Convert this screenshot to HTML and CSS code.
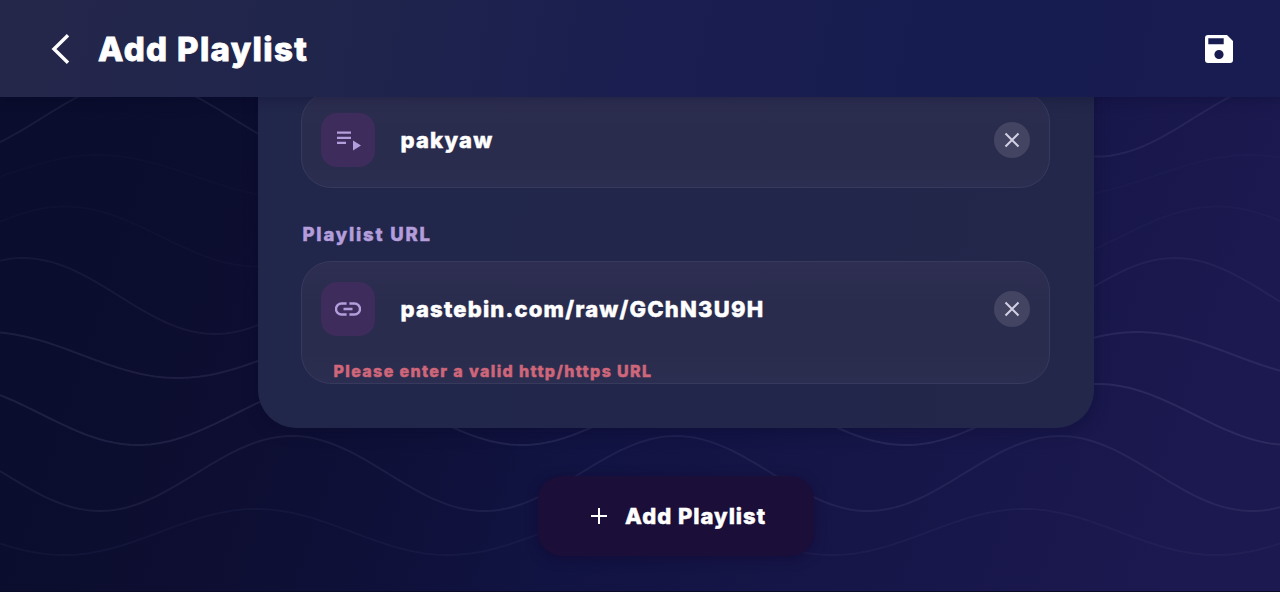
FILE: index.html
```html
<!DOCTYPE html>
<html lang="en">
<head>
    <meta charset="UTF-8">
    <title>Add Playlist</title>
    <link rel="stylesheet" href="styles.css">
</head>
<body>
    <svg class="waves" id="waves" viewBox="0 0 1280 592" aria-hidden="true"></svg>

    <header class="app-bar">
        <button class="icon-button" aria-label="Back">
            <svg width="20" height="30" viewBox="0 0 20 30"><path d="M18 1.3 4 15l14 13.7" fill="none" stroke="#fff" stroke-width="3.4"/></svg>
        </button>
        <h1 class="title">Add Playlist</h1>
        <button class="icon-button save" aria-label="Save">
            <svg width="28" height="28" viewBox="0 0 28 28"><path fill="#fff" fill-rule="evenodd" d="M3 0H22L28 6V25a3 3 0 0 1-3 3H3a3 3 0 0 1-3-3V3a3 3 0 0 1 3-3zM3.3 3.2V9.2H18.7V3.2zM14 14.9a4.6 4.6 0 1 0 0 9.2 4.6 4.6 0 0 0 0-9.2z"/></svg>
        </button>
    </header>

    <main class="content">
        <section class="card">
            <div class="field">
                <div class="field-row">
                    <span class="field-icon">
                        <svg width="26" height="22" viewBox="0 0 26 22" fill="#b39ddb"><path d="M2 2.6h14v2.2H2zM2 7.7h14v2.2H2zM2 12.8h9v2.2H2zM18 11.6v10l8-5z"/></svg>
                    </span>
                    <span class="field-value">pakyaw</span>
                    <button class="clear" aria-label="Clear name">
                        <svg width="16" height="16" viewBox="0 0 16 16"><path d="M1.5 1.5l13 13M14.5 1.5l-13 13"/></svg>
                    </button>
                </div>
            </div>

            <div class="label">Playlist URL</div>
            <div class="field">
                <div class="field-row">
                    <span class="field-icon">
                        <svg width="26" height="14" viewBox="0 0 26 14" fill="none" stroke="#b39ddb" stroke-width="2.4"><path d="M11.6 1.5H6.5a5.5 5.5 0 0 0 0 11h5.1M14.4 1.5h5.1a5.5 5.5 0 0 1 0 11h-5.1M8.5 7h9"/></svg>
                    </span>
                    <span class="field-value">pastebin.com/raw/GChN3U9H</span>
                    <button class="clear" aria-label="Clear URL">
                        <svg width="16" height="16" viewBox="0 0 16 16"><path d="M1.5 1.5l13 13M14.5 1.5l-13 13"/></svg>
                    </button>
                </div>
                <div class="error">Please enter a valid http/https URL</div>
            </div>
        </section>

        <button class="submit">
            <svg width="16" height="16" viewBox="0 0 16 16"><path d="M8 0v16M0 8h16" stroke="#fff" stroke-width="2"/></svg>
            <span>Add Playlist</span>
        </button>
    </main>

    <script>
        // x of a crest, centre line, amplitude, opacity
        const waves = [
            [137, 118.5, 38, 0.07],
            [98, 176, 21, 0.018],
            [65, 236.5, 30, 0.022],
            [23, 296, 38, 0.055],
            [-14, 355, 23, 0.085],
            [-54, 414.5, 30.5, 0.095],
            [-92, 473.5, 37.5, 0.07],
            [-128, 532, 23, 0.04]
        ];
        const period = 384;
        const svg = document.getElementById('waves');

        waves.forEach(([crest, center, amp, opacity]) => {
            let d = '';
            for (let x = 0; x <= 1280; x += 5) {
                const y = center - amp * Math.cos((x - crest) / period * 2 * Math.PI);
                d += (x ? 'L' : 'M') + x + ' ' + y.toFixed(2);
            }
            const path = document.createElementNS('http://www.w3.org/2000/svg', 'path');
            path.setAttribute('d', d);
            path.setAttribute('stroke-opacity', opacity);
            svg.appendChild(path);
        });
    </script>
</body>
</html>
```
FILE: styles.css
```css
* {
    box-sizing: border-box;
}
body {
    margin: 0;
    height: 592px;
    overflow: hidden;
    display: flex;
    flex-direction: column;
    font-family: Inter, "Liberation Sans", sans-serif;
    color: #fff;
    -webkit-text-stroke: 0.45px;
    background: linear-gradient(108deg, #0a0d2d 4%, #0d0e31 26%, #111342 50%, #171649 72%, #1b194f 92%);
    border-bottom: 1px solid #090a25;
}
button {
    padding: 0;
    border: none;
    background: none;
    color: inherit;
    font: inherit;
    cursor: pointer;
}
svg {
    display: block;
}
.waves {
    position: absolute;
    top: 0;
    left: 0;
    width: 1280px;
    height: 592px;
    fill: none;
    stroke: #d8d0ff;
    stroke-width: 2;
}
.app-bar {
    position: relative;
    z-index: 1;
    flex: none;
    display: flex;
    align-items: center;
    height: 97px;
    padding: 0 47px 0 50px;
    background: linear-gradient(100deg, #25274a 0%, #20254c 25%, #1a1e50 50%, #171c50 75%, #181c50 100%);
    box-shadow: 0 2px 12px rgba(3, 4, 30, 0.25);
}
.title {
    margin: 0 0 0 28px;
    font-size: 33px;
    font-weight: 800;
    line-height: 40px;
    letter-spacing: 1.35px;
    -webkit-text-stroke: 0.8px;
}
.save {
    margin-left: auto;
}
.content {
    position: relative;
    flex: 1;
    display: flex;
    flex-direction: column;
    align-items: center;
    min-height: 0;
    overflow: hidden;
}
.card {
    flex: none;
    width: 836px;
    height: 379px;
    margin: -48px 0 0 71px;
    padding: 43px 44px 0;
    border-radius: 38px;
    background: linear-gradient(100deg, #21264b, #21264a 60%, #23284b);
    box-shadow: 0 4px 16px rgba(5, 5, 35, 0.3);
}
.field {
    height: 96px;
    margin-left: -1px;
    padding: 20px 19px 0;
    border: 1px solid #373a5c;
    border-radius: 30px;
    background: linear-gradient(180deg, #2d2e51 0%, #2a2c4e 35%, #2a2c4d 75%, #2c2e51 100%);
}
.label + .field {
    height: 123px;
}
.field-row {
    display: flex;
    align-items: center;
    height: 54px;
}
.field-icon {
    display: flex;
    align-items: center;
    justify-content: center;
    width: 54px;
    height: 54px;
    border-radius: 16px;
    background: #3e2c5c;
}
.field-value {
    margin-left: 26px;
    font-size: 22px;
    font-weight: 800;
    letter-spacing: 1.2px;
}
.clear {
    display: flex;
    align-items: center;
    justify-content: center;
    width: 36px;
    height: 36px;
    margin-left: auto;
    border-radius: 50%;
    background: #434462;
}
.clear path {
    fill: none;
    stroke: #d2d0e2;
    stroke-width: 2;
}
.label {
    margin: 33px 0 14px 1px;
    font-size: 18.5px;
    font-weight: 800;
    line-height: 26px;
    letter-spacing: 1.8px;
    color: #b39ddb;
}
.error {
    margin: 25px 0 0 13px;
    font-size: 16px;
    font-weight: 800;
    line-height: 20px;
    letter-spacing: 1.37px;
    color: #cf6679;
}
.submit {
    flex: none;
    display: flex;
    align-items: center;
    gap: 18px;
    width: 276px;
    height: 80px;
    margin: 48px 0 0 72px;
    padding-left: 53px;
    border-radius: 24px;
    background: #1b0e39;
    box-shadow: 0 3px 12px rgba(15, 8, 50, 0.5);
    font-size: 22px;
    font-weight: 800;
    letter-spacing: 0.98px;
}
```
